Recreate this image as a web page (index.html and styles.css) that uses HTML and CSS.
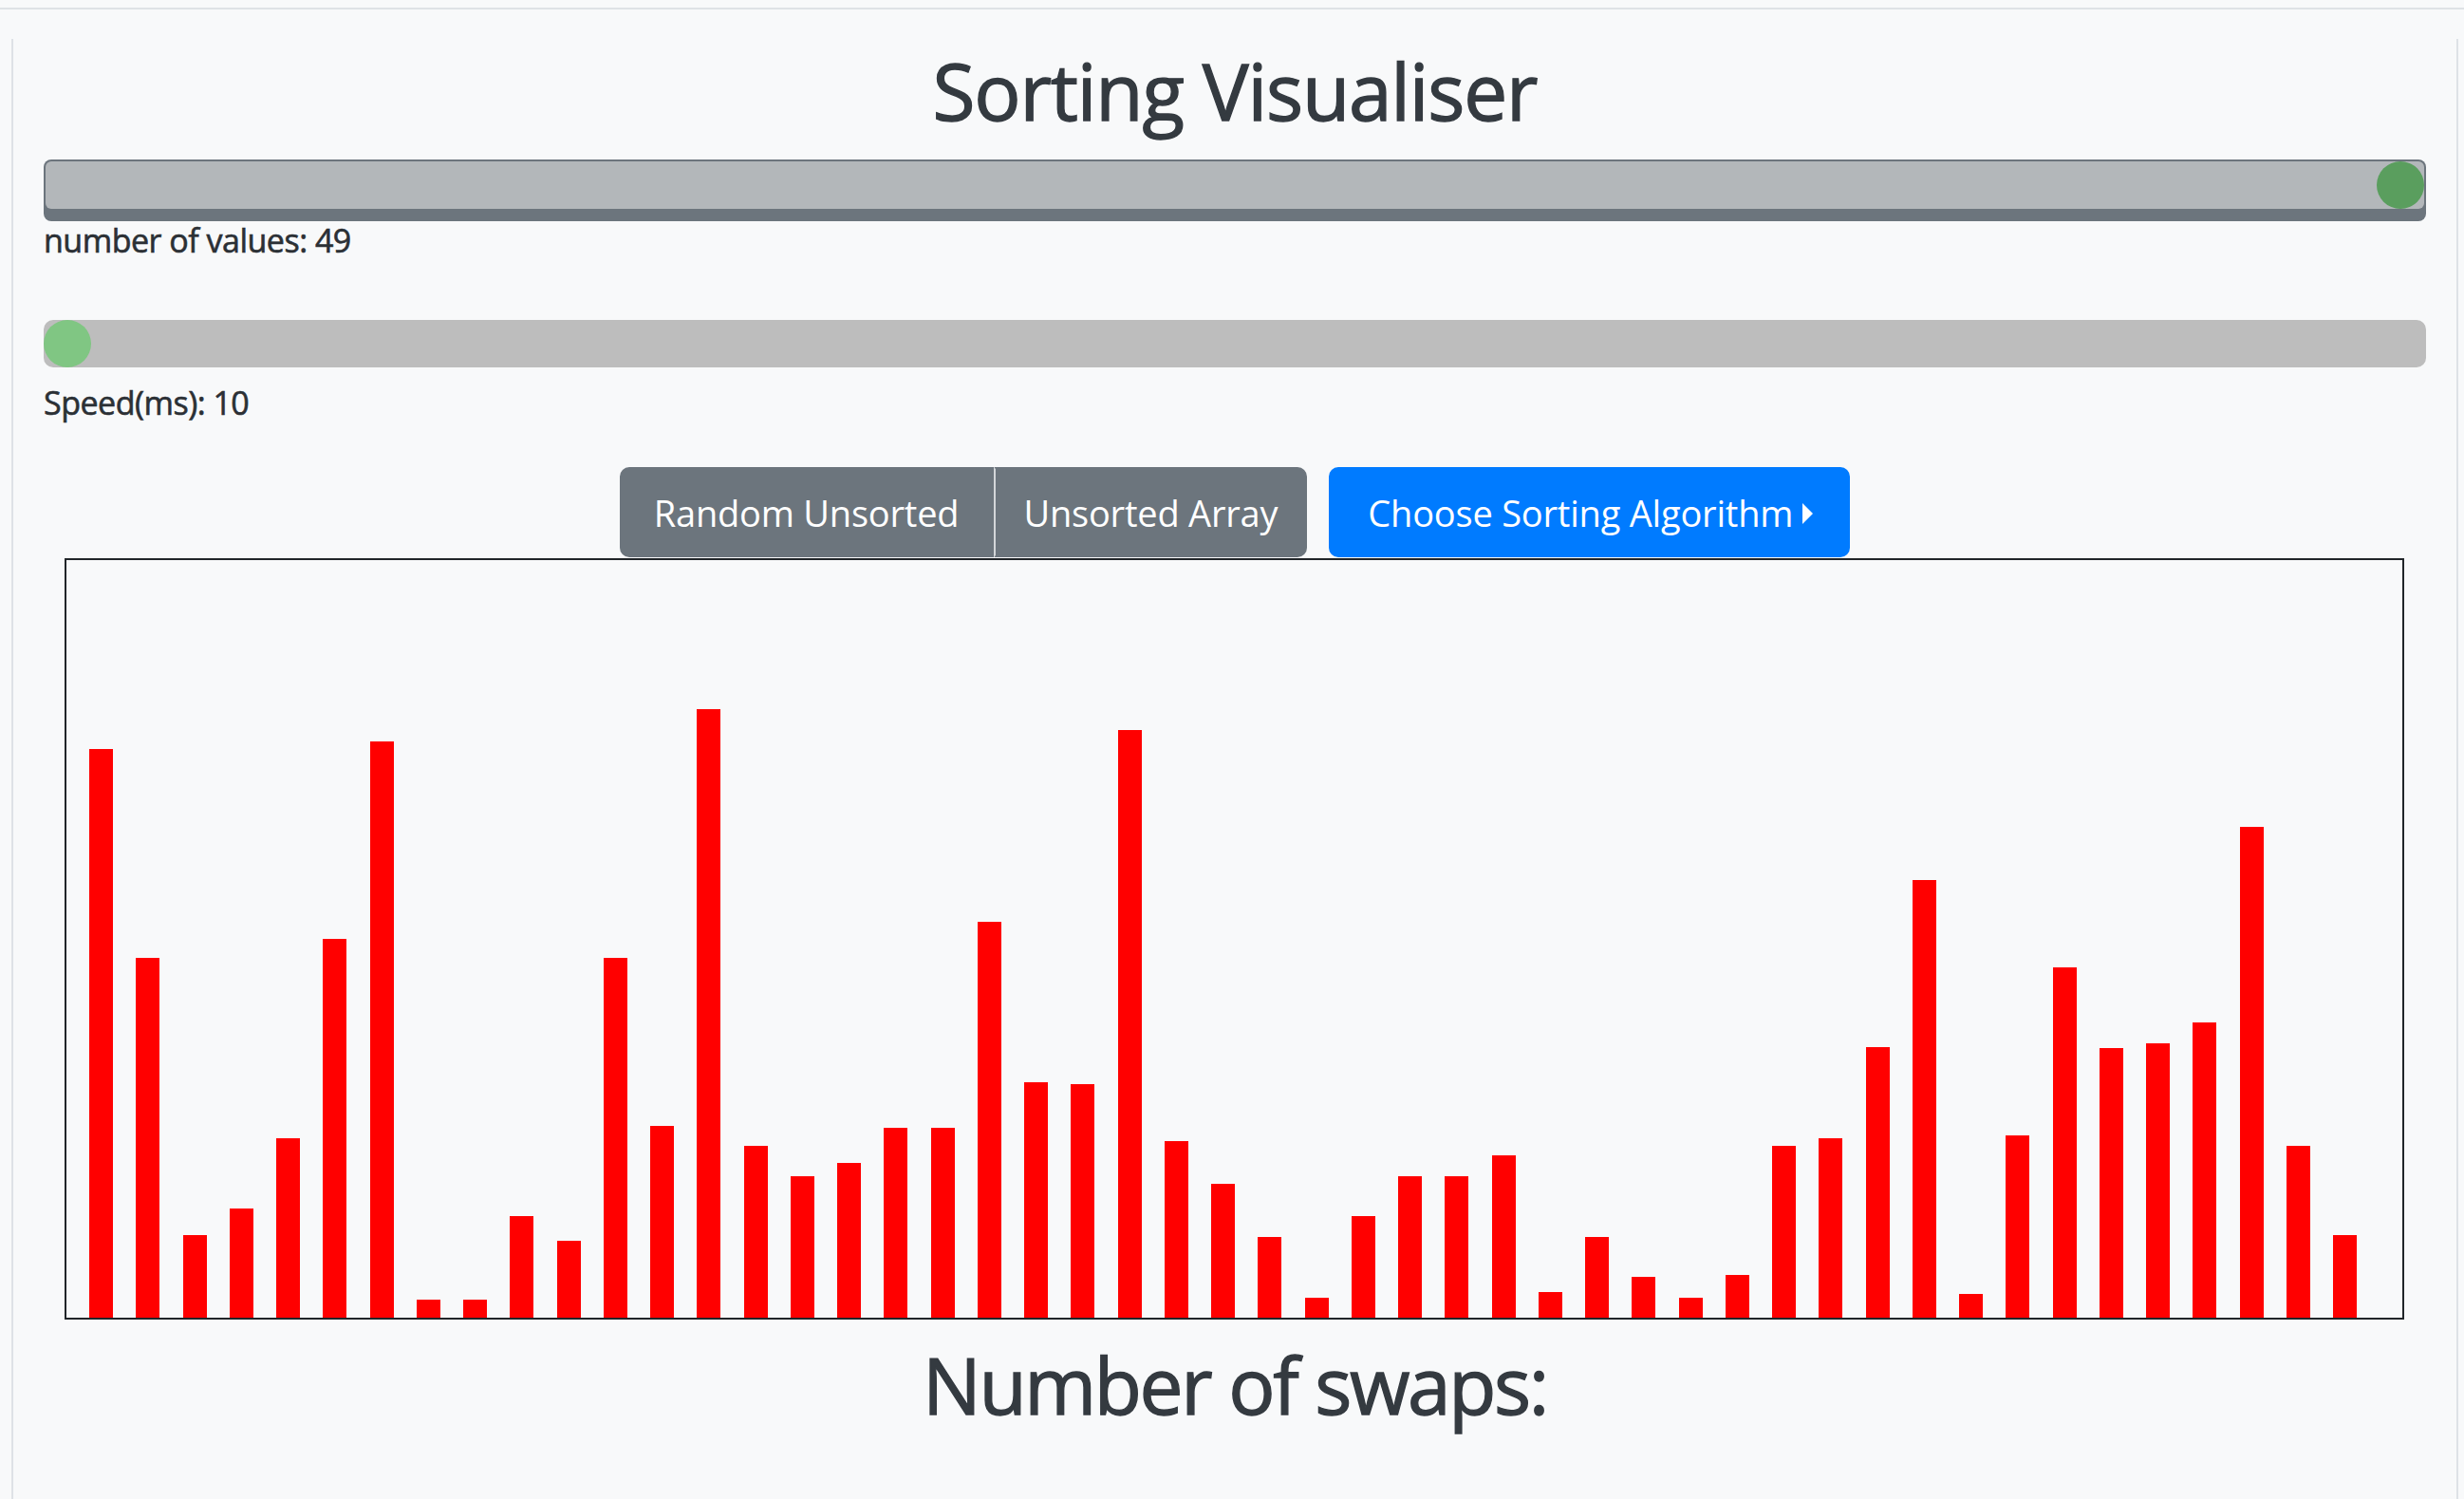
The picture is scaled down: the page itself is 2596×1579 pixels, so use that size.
FILE: index.html
```html
<!DOCTYPE html>
<html lang="en">
<head>
<meta charset="utf-8">
<title>Sorting Visualiser</title>
<link rel="stylesheet" href="styles.css">
</head>
<body>
<div class="topline"></div>
<div class="page">
  <h1 class="title">Sorting Visualiser</h1>

  <div class="range range-boxed">
    <div class="track track-boxed"><span class="thumb thumb-boxed"></span></div>
  </div>
  <p class="label label-first">number of values: 49</p>

  <div class="range range-plain">
    <div class="track track-plain"><span class="thumb thumb-plain"></span></div>
  </div>
  <p class="label label-second">Speed(ms): 10</p>

  <div class="controls">
    <div class="btn-group">
      <button class="btn btn-secondary btn-first">Random Unsorted</button><button class="btn btn-secondary btn-last">Unsorted Array</button>
    </div>
    <button class="btn btn-primary">Choose Sorting Algorithm<span class="caret"></span></button>
  </div>

  <div class="chart">
    <div class="bar" style="height:599px"></div>
    <div class="bar" style="height:379px"></div>
    <div class="bar" style="height:87px"></div>
    <div class="bar" style="height:115px"></div>
    <div class="bar" style="height:189px"></div>
    <div class="bar" style="height:399px"></div>
    <div class="bar" style="height:607px"></div>
    <div class="bar" style="height:19px"></div>
    <div class="bar" style="height:19px"></div>
    <div class="bar" style="height:107px"></div>
    <div class="bar" style="height:81px"></div>
    <div class="bar" style="height:379px"></div>
    <div class="bar" style="height:202px"></div>
    <div class="bar" style="height:641px"></div>
    <div class="bar" style="height:181px"></div>
    <div class="bar" style="height:149px"></div>
    <div class="bar" style="height:163px"></div>
    <div class="bar" style="height:200px"></div>
    <div class="bar" style="height:200px"></div>
    <div class="bar" style="height:417px"></div>
    <div class="bar" style="height:248px"></div>
    <div class="bar" style="height:246px"></div>
    <div class="bar" style="height:619px"></div>
    <div class="bar" style="height:186px"></div>
    <div class="bar" style="height:141px"></div>
    <div class="bar" style="height:85px"></div>
    <div class="bar" style="height:21px"></div>
    <div class="bar" style="height:107px"></div>
    <div class="bar" style="height:149px"></div>
    <div class="bar" style="height:149px"></div>
    <div class="bar" style="height:171px"></div>
    <div class="bar" style="height:27px"></div>
    <div class="bar" style="height:85px"></div>
    <div class="bar" style="height:43px"></div>
    <div class="bar" style="height:21px"></div>
    <div class="bar" style="height:45px"></div>
    <div class="bar" style="height:181px"></div>
    <div class="bar" style="height:189px"></div>
    <div class="bar" style="height:285px"></div>
    <div class="bar" style="height:461px"></div>
    <div class="bar" style="height:25px"></div>
    <div class="bar" style="height:192px"></div>
    <div class="bar" style="height:369px"></div>
    <div class="bar" style="height:284px"></div>
    <div class="bar" style="height:289px"></div>
    <div class="bar" style="height:311px"></div>
    <div class="bar" style="height:517px"></div>
    <div class="bar" style="height:181px"></div>
    <div class="bar" style="height:87px"></div>
  </div>

  <h1 class="swaps">Number of swaps:</h1>
</div>
</body>
</html>
```

FILE: styles.css
```css
* {
  box-sizing: border-box;
}

html,
body {
  margin: 0;
}

body {
  background: #f8f9fa;
  color: #343a40;
  font-family: "Open Sans", "Noto Sans", "Liberation Sans", sans-serif;
  padding-top: 8px;
}

.topline {
  height: 2px;
  background: #dee2e6;
}

.page {
  margin: 0 6px 0 12px;
  border-left: 2px solid #dee2e6;
  border-right: 2px solid #dee2e6;
  padding: 0 32px;
  min-height: calc(100vh - 10px);
}

.title,
.swaps {
  font-size: 82px;
  font-weight: 400;
  line-height: 108px;
  text-align: center;
  color: #343a40;
  -webkit-text-stroke: 1.3px #343a40;
}

.title {
  margin: 31px 0 19px;
  letter-spacing: -1.2px;
}

.swaps {
  margin: 14px 0 0;
  letter-spacing: -2.4px;
}

/* range sliders */
.range-boxed {
  background: #6c757d;
  border-radius: 8px;
  padding: 2px 2px 13px 2px;
}

.track {
  height: 50px;
  display: flex;
  align-items: center;
}

.track-boxed {
  background: #b3b7ba;
  border-radius: 6px;
  justify-content: flex-end;
}

.track-plain {
  background: #bdbdbd;
  border-radius: 10px;
  justify-content: flex-start;
}

.thumb {
  width: 50px;
  height: 50px;
  border-radius: 50%;
  display: block;
}

.thumb-boxed {
  background: #5a9e5e;
}

.thumb-plain {
  background: #80c683;
}

.label {
  font-size: 34px;
  line-height: 40px;
  letter-spacing: -0.5px;
  color: #2b3035;
  -webkit-text-stroke: 0.6px #2b3035;
}

.label-first {
  margin: 0 0 64px;
}

.label-second {
  margin: 17px 0 48px;
}

/* buttons */
.controls {
  display: flex;
  justify-content: center;
  gap: 23px;
}

.btn-group {
  display: flex;
}

.btn {
  font-family: "Open Sans", "Noto Sans", "Liberation Sans", sans-serif;
  font-size: 38px;
  line-height: 57px;
  letter-spacing: -0.2px;
  padding: 18px 34px 16px;
  border: 2px solid transparent;
  border-radius: 10px;
  color: #ffffff;
  display: flex;
  align-items: center;
}

.btn-secondary {
  background: #6c757d;
  border-color: #6c757d;
}

.btn-first {
  border-radius: 10px 0 0 10px;
  padding-left: 34px;
  padding-right: 35px;
}

.btn-last {
  border-radius: 0 10px 10px 0;
  border-left: 2px solid #d3d6d9;
  padding-left: 29px;
  padding-right: 29px;
}

.btn-primary {
  background: #007bff;
  border-color: #007bff;
  padding-left: 39px;
  padding-right: 37px;
}

.caret {
  display: inline-block;
  width: 0;
  height: 0;
  margin-left: 10px;
  border-top: 11px solid transparent;
  border-bottom: 11px solid transparent;
  border-left: 11px solid #ffffff;
}

/* chart */
.chart {
  margin: 1px 23px 0 22px;
  height: 802px;
  border: 2px solid #212529;
  display: flex;
  align-items: flex-end;
  padding-left: 24px;
  gap: 24.25px;
}

.bar {
  width: 25px;
  flex: 0 0 25px;
  background: #ff0000;
}
```
